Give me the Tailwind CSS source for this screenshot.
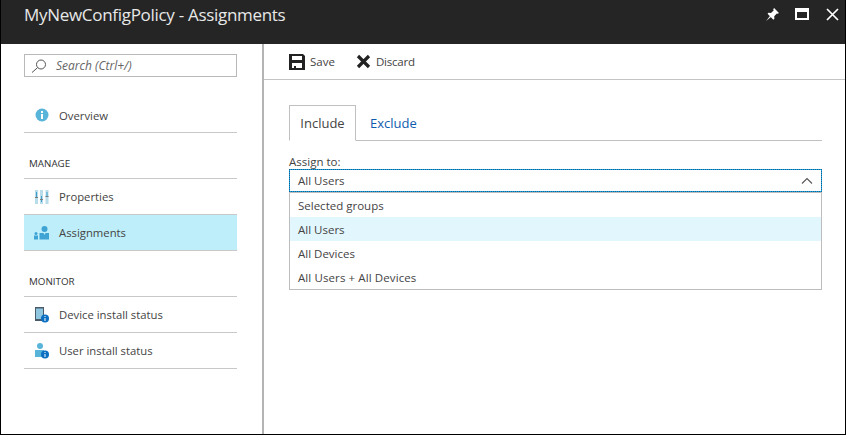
<!DOCTYPE html>
<html lang="en">
<head>
<meta charset="UTF-8">
<title>MyNewConfigPolicy - Assignments</title>
<script src="https://cdn.jsdelivr.net/npm/@tailwindcss/browser@4"></script>
</head>
<body class="font-['Open_Sans',sans-serif] antialiased bg-white">
<div class="w-[846px] h-[435px] flex flex-col border-r border-b border-l border-black overflow-hidden text-[#444] text-[11.5px]">
  <!-- title bar -->
  <header class="h-[44px] shrink-0 bg-[#252525] flex items-start justify-between pl-[23px] pr-[6px]">
    <h1 class="text-[#e8e8e8] text-[17px] tracking-[-0.3px] leading-[30px]">MyNewConfigPolicy - Assignments</h1>
    <div class="flex items-center h-[28px]">
      <svg width="15" height="15" viewBox="0 0 14 14" fill="#fff"><path d="M8.500 1 13 5.500 12 6.400 11 6 8.600 8.600 8.800 11 7.800 11.800 2.400 6.400 3.200 5.400 5.600 5.600 8.200 3 7.600 2Z"/><path d="M4.800 8.200 1 13 5.800 9.200Z"/></svg>
      <svg class="ml-[15px]" width="14" height="12" viewBox="0 0 14 12"><path fill="#fff" d="M0 0h14v12H0z"/><path fill="#252525" d="M2 4h10v6H2z"/></svg>
      <svg class="ml-[17px]" width="13" height="13" viewBox="0 0 13 13" stroke="#fff" stroke-width="1.700"><path d="M1 1l11 11M12 1 1 12"/></svg>
    </div>
  </header>

  <div class="flex flex-1 min-h-0">
    <!-- sidebar -->
    <aside class="w-[263px] shrink-0 border-r-2 border-[#b4b4b4] pl-[23px] pr-[25px] pt-[10px] text-[11.3px]">
      <div class="h-[23px] border border-[#b9b9b9] flex items-center pl-[6px] gap-[9px]">
        <svg width="16" height="14" viewBox="0 0 16 14" fill="none" stroke="#555"><circle cx="10" cy="5.500" r="4.500"/><path d="M6.600 8.600 1 13.500"/></svg>
        <span class="italic text-[#666] text-[12px] pt-px">Search (Ctrl+/)</span>
      </div>

      <div class="mt-[21px] h-[35px] border-b border-[#c8c8c8] flex items-center pl-[11px] gap-[10px]">
        <svg width="14" height="14" viewBox="0 0 14 14"><circle cx="7" cy="7" r="6.500" fill="#59b4d9"/><path fill="#fff" d="M6 6h2v5H6zM6 3h2v2H6z"/></svg>
        <span class="pt-[2px]">Overview</span>
      </div>

      <div class="mt-[24px] h-[22px] border-b border-[#c8c8c8] pl-[5px] text-[9.8px] leading-[14px] text-[#333]">MANAGE</div>
      <div class="h-[36px] border-b border-[#c8c8c8] flex items-center pl-[11px] gap-[10px]">
        <svg width="14" height="14" viewBox="0 0 14 14"><path fill="#b8dcea" d="M0 0h3v14H0zM5 0h3v14H5zM10.500 0h3v14h-3z"/><path fill="#3f9fc9" d="M1 2h1v5H1zM6 6h1v6H6zM11.500 2h1v4h-1z"/><path fill="#7a7a7a" d="M0 7h3v1H0zM5 9h3v1H5zM10.500 6h3v1h-3z"/></svg>
        <span class="pt-[2px]">Properties</span>
      </div>
      <div class="h-[36px] bg-[#bdeefa] border-b border-[#c8c8c8] flex items-center pl-[10px] gap-[10px]">
        <svg width="15" height="14" viewBox="0 0 15 14"><circle cx="10.500" cy="3" r="3" fill="#3fa4d3"/><path fill="#3fa4d3" d="M5.500 7h9.500v6.500H5.500zM0 9.500h4v4H0z"/><circle cx="2" cy="7.500" r="1.500" fill="#3fa4d3"/><path fill="#bdeefa" d="M9.500 7l1 2 1-2z"/></svg>
        <span class="pt-[2px]">Assignments</span>
      </div>

      <div class="mt-[24px] h-[22px] border-b border-[#c8c8c8] pl-[5px] text-[9.8px] leading-[14px] text-[#333]">MONITOR</div>
      <div class="h-[36px] border-b border-[#c8c8c8] flex items-center pl-[11px] gap-[10px]">
        <svg width="14" height="16" viewBox="0 0 14 16"><path fill="#4a5a68" d="M0 0h9v14H0z"/><path fill="#8fc6e0" d="M1 1.500h7V12H1z"/><circle cx="10" cy="11.500" r="4" fill="#0b6fc2"/><path fill="#fff" d="M9.500 11h1v3h-1zM9.500 9h1v1h-1z"/></svg>
        <span class="pt-[2px]">Device install status</span>
      </div>
      <div class="h-[36px] border-b border-[#c8c8c8] flex items-center pl-[11px] gap-[10px]">
        <svg width="14" height="16" viewBox="0 0 14 16"><circle cx="5" cy="3" r="3" fill="#59b4d9"/><path fill="#59b4d9" d="M0 7h9v7H0z"/><circle cx="10" cy="11.500" r="4" fill="#0b6fc2"/><path fill="#fff" d="M9.500 11h1v3h-1zM9.500 9h1v1h-1z"/></svg>
        <span class="pt-[2px]">User install status</span>
      </div>
    </aside>

    <!-- main blade -->
    <main class="flex-1 min-w-0">
      <div class="h-[36px] border-b border-[#c4c4c4] flex items-center pl-[25px] gap-[21px]">
        <div class="flex items-center gap-[5px]">
          <svg width="16" height="16" viewBox="0 0 16 16"><path fill="#222" fill-rule="evenodd" d="M0 0h14l2 2v14H0zM3 2v4h10V2zM3 9v5h2v-2h2v2h6V9z"/></svg>
          <span>Save</span>
        </div>
        <div class="flex items-center gap-[5px]">
          <svg width="15" height="15" viewBox="0 0 15 15" stroke="#222" stroke-width="3.200"><path d="M2 2l11 11M13 2 2 13"/></svg>
          <span class="tracking-[-0.2px]">Discard</span>
        </div>
      </div>

      <div class="pl-[25px] pr-[23px] pt-[25px]">
        <div class="flex h-[36px] border-b border-[#c0c0c0] text-[13px]">
          <div class="w-[67px] h-[36px] pt-[2px] border border-b-white border-[#c0c0c0] flex items-center justify-center text-[#444]">Include</div>
          <div class="pl-[14px] pt-[2px] flex items-center text-[#0f5cae]">Exclude</div>
        </div>

        <div class="mt-[13px] leading-[15px]">Assign to:</div>
        <div class="h-[23px] border border-[#12a5e0] outline-1 outline-dotted outline-[#1a5f94] -outline-offset-1 flex items-center justify-between pl-[8px] pr-[8px]">
          <span>All Users</span>
          <svg width="12" height="7" viewBox="0 0 12 7" fill="none" stroke="#555" stroke-width="1.100"><path d="M1 6.500 6 1.500l5 5"/></svg>
        </div>
        <ul class="border-r border-b border-l border-t border-[#bdbdbd] h-[98px]">
          <li class="h-[24px] pl-[8px] pt-px flex items-center">Selected groups</li>
          <li class="h-[24px] pl-[8px] pt-px flex items-center bg-[#e2f6fd]">All Users</li>
          <li class="h-[24px] pl-[8px] pt-px flex items-center">All Devices</li>
          <li class="h-[24px] pl-[8px] pt-px flex items-center tracking-[0.1px]">All Users + All Devices</li>
        </ul>
      </div>
    </main>
  </div>
</div>
</body>
</html>
